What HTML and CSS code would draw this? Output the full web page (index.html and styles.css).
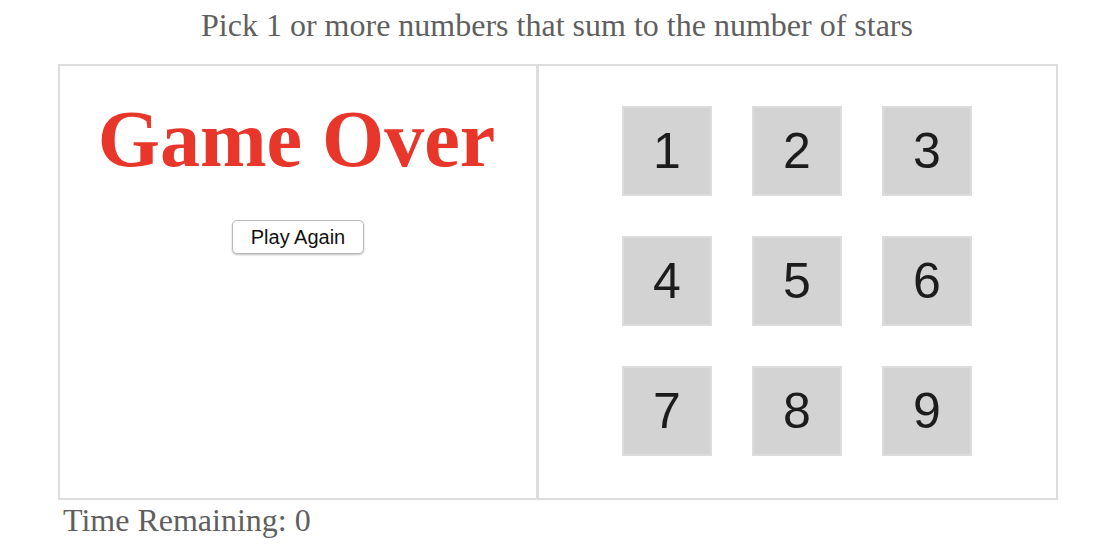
FILE: index.html
```html
<!DOCTYPE html>
<html>
<head>
<meta charset="utf-8">
<link rel="stylesheet" href="styles.css">
</head>
<body>
<div class="app">
  <div class="help">Pick 1 or more numbers that sum to the number of stars</div>
  <div class="game">
    <div class="left">
      <div class="over">Game Over</div>
      <button class="again">Play Again</button>
    </div>
    <div class="right">
      <div class="grid">
        <div class="num">1</div>
        <div class="num">2</div>
        <div class="num">3</div>
        <div class="num">4</div>
        <div class="num">5</div>
        <div class="num">6</div>
        <div class="num">7</div>
        <div class="num">8</div>
        <div class="num">9</div>
      </div>
    </div>
  </div>
  <div class="timer">Time Remaining: 0</div>
</div>
</body>
</html>
```
FILE: styles.css
```css
html, body {
  margin: 0;
  padding: 0;
  background: #fff;
}
body {
  font-family: "Liberation Serif", "Times New Roman", serif;
  color: #5f5f5f;
}
.app {
  width: 1000px;
  margin-left: 58px;
}
.help {
  font-size: 32px;
  text-align: center;
  height: 64px;
  line-height: 50px;
  padding-right: 2px;
  box-sizing: border-box;
}
.game {
  display: flex;
  border: 2px solid #ddd;
  height: 432px;
}
.left {
  width: 476px;
  border-right: 3px solid #ddd;
  display: flex;
  flex-direction: column;
  align-items: center;
}
.over {
  font-weight: bold;
  font-size: 80px;
  color: #e8372a;
  margin-top: 27px;
  line-height: 92px;
  padding-right: 3px;
}
.again {
  margin-top: 35px;
  font-family: "Liberation Sans", Arial, sans-serif;
  font-size: 20px;
  color: #111;
  background: #fff;
  border: 1px solid #bbb;
  border-radius: 5px;
  box-shadow: 0 1px 2px rgba(0,0,0,0.25);
  padding: 3px 18px 3px;
  height: 34px;
}
.right {
  flex: 1;
  display: flex;
  justify-content: center;
  align-items: flex-start;
  padding-top: 40px;
  padding-right: 1px;
}
.grid {
  display: grid;
  grid-template-columns: repeat(3, 90px);
  grid-auto-rows: 90px;
  gap: 40px;
}
.num {
  box-sizing: border-box;
  background: #d3d3d3;
  border: 2px solid #dcdcdc;
  font-family: "Liberation Sans", Arial, sans-serif;
  font-size: 50px;
  color: #1c1c1c;
  display: flex;
  align-items: center;
  justify-content: center;
}
.timer {
  font-size: 32px;
  margin-left: 5px;
  margin-top: 2px;
}
```
